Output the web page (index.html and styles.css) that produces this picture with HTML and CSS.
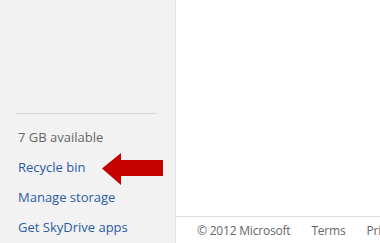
FILE: index.html
```html
<!DOCTYPE html>
<html>
<head lang="en">
    <meta charset="UTF-8">
    <title>SkyDrive</title>
    <link rel="stylesheet" href="styles.css">
</head>
<body>
<div class="page">
    <div class="side">
        <div class="sep"></div>
        <ul class="side-list">
            <li class="quota">7 GB available</li>
            <li><a href="#">Recycle bin</a></li>
            <li><a href="#">Manage storage</a></li>
            <li><a href="#">Get SkyDrive apps</a></li>
        </ul>
        <!-- 红色箭头，指向回收站 -->
        <svg class="arrow" width="62" height="34" viewBox="0 0 62 34">
            <polygon points="0,15.5 19,0 19,7 61,7 61,23 19,23 19,32" fill="#c40000"/>
        </svg>
    </div>
    <div class="main">
        <div class="content"></div>
        <div class="footer">
            <span>&copy; 2012 Microsoft</span>
            <a href="#">Terms</a>
            <a href="#">Privacy</a>
        </div>
    </div>
</div>
</body>
</html>
```

FILE: styles.css
```css
* {
    padding: 0;
    margin: 0;
    list-style: none;
    border: 0;
}

body {
    font-family: "Open Sans", "Liberation Sans", sans-serif;
    font-size: 13px;
    background: #fff;
    overflow: hidden;
}

a {
    text-decoration: none;
}

.page {
    display: flex;
    width: 380px;
    height: 243px;
}

.side {
    width: 176px;
    flex-shrink: 0;
    background: #f2f2f2;
    border-right: 1px solid #e6e6e6;
    display: flex;
    flex-direction: column;
    justify-content: flex-end;
    padding: 0 0 0 16px;
    box-sizing: border-box;
    position: relative;
}

.sep {
    height: 1px;
    background: #d8d8d8;
    margin-right: 18px;
    margin-bottom: 8px;
}

.side-list {
    padding-left: 2px;
    padding-bottom: 1px;
}

.side-list li {
    line-height: 30px;
    height: 30px;
}

.side-list a {
    color: #2c5aa6;
}

.quota {
    color: #666;
}

.arrow {
    position: absolute;
    left: 102px;
    top: 153px;
}

.main {
    flex: 1;
    display: flex;
    flex-direction: column;
}

.content {
    flex: 1;
}

.footer {
    height: 26px;
    border-top: 1px solid #dcdcdc;
    padding-left: 21px;
    display: flex;
    gap: 21px;
    white-space: nowrap;
    line-height: 28px;
    color: #666;
    font-size: 12px;
    letter-spacing: -0.2px;
}

.footer a {
    color: #666;
}
```
